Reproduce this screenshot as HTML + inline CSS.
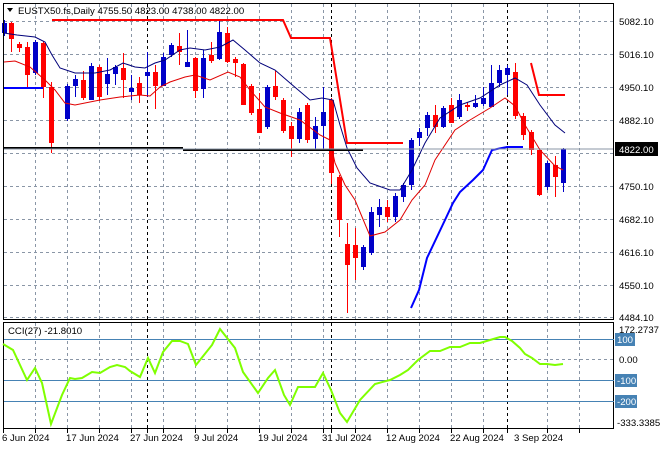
<!DOCTYPE html>
<html><head><meta charset="utf-8"><style>
body{margin:0;background:#fff;width:660px;height:450px;overflow:hidden;font-family:"Liberation Sans",sans-serif;}
svg{position:absolute;left:0;top:0}
text{font-family:"Liberation Sans",sans-serif;font-size:9.6px;fill:#000}
</style></head><body>
<svg id="s" width="660" height="450" viewBox="0 0 660 450">
<g id="grid" stroke="#8a96a6" stroke-width="1" stroke-dasharray="3,3" fill="none"></g>
<g id="c"></g>
<polyline fill="none" stroke="#00007a" stroke-width="1" points="4,33 17,35 35,37 45,42 52,55 60,68 75,73 95,73 110,70 123,63 135,67 145,68 155,63 165,60 180,50 190,48 205,50 220,47 233,40 245,50 260,63 275,70 290,83 310,100 322,98 333,100 340,125 347,148 357,168 370,183 390,190 400,190 412,170 425,143 440,118 460,105 480,98 500,85 515,78 527,85 540,105 555,125 565,133"/>
<polyline fill="none" stroke="#e00000" stroke-width="1" points="4,62 15,61 30,67 45,80 55,90 65,103 75,105 100,100 120,97 140,95 150,96 160,87 170,82 185,77 195,75 210,80 228,72 240,77 250,90 265,107 280,113 300,120 320,135 330,140 335,163 345,185 355,200 370,236 385,232 400,220 412,200 425,185 435,160 455,130 470,120 490,108 505,98 515,106 525,125 540,150 555,166 563,170"/>
<polyline fill="none" stroke="#ff0000" stroke-width="2" points="52,20 283,20 291,38 330,38 347,143 403,143"/>
<polyline fill="none" stroke="#ff0000" stroke-width="2" points="531,63 539,95 565,95"/>
<polyline fill="none" stroke="#0000ff" stroke-width="2" points="4,88 43,88"/>
<polyline fill="none" stroke="#0000ff" stroke-width="2" points="411,308 419,290 427,258 445,220 453,203 460,192 473,180 483,170 492,150 507,147 523,147"/>
<polyline fill="none" stroke="#000" stroke-width="2" points="4,148 183,148"/>
<polyline fill="none" stroke="#000" stroke-width="2" points="183,150 363,150"/>
<line x1="4" y1="149" x2="614" y2="149" stroke="#8a96a6"/>
<rect x="3.5" y="3.5" width="610" height="316" fill="none" stroke="#000"/>
<rect x="3.5" y="322.5" width="610" height="106" fill="none" stroke="#000"/>
<g stroke="#4682b4" stroke-width="1">
<line x1="4" y1="339.5" x2="614" y2="339.5"/><line x1="4" y1="380.5" x2="614" y2="380.5"/><line x1="4" y1="401.5" x2="614" y2="401.5"/>
</g>
<line x1="4" y1="359.5" x2="614" y2="359.5" stroke="#8a96a6" stroke-dasharray="3,3"/>
<polyline fill="none" stroke="#7fff00" stroke-width="2" points="3,344 13,350 27,380 35,368 42,383 51,424 62,395 70,378 75,379 82,378 92,372 100,373 110,367 117,365 125,367 130,371 140,377 148,358 155,373 163,352 172,341 180,341 188,344 196,365 212,345 220,329 235,348 243,372 258,393 268,378 275,370 284,395 290,405 298,387 315,387 323,373 331,390 340,413 347,422 360,400 375,384 390,380 400,375 408,370 418,360 430,351 440,351 450,347 460,347 470,343 480,343 490,340 500,337 505,337 512,341 520,348 525,354 532,358 540,364 547,364 555,365 563,364"/>
<g>
<text x="619" y="25">5082.10</text><text x="619" y="58">5016.10</text><text x="619" y="91">4950.10</text><text x="619" y="124">4882.10</text>
<rect x="615" y="142" width="43" height="14" fill="#000"/><text x="619" y="153" style="fill:#fff">4822.00</text>
<text x="619" y="190">4750.10</text><text x="619" y="223">4682.10</text><text x="619" y="256">4616.10</text><text x="619" y="289">4550.10</text><text x="619" y="321">4484.10</text>
<text x="619" y="333">172.2737</text>
<rect x="615" y="333" width="20" height="13" fill="#4682b4"/><text x="617" y="343" style="fill:#fff">100</text>
<text x="619" y="363">0.00</text>
<rect x="615" y="374" width="22" height="13" fill="#4682b4"/><text x="617" y="384" style="fill:#fff">-100</text>
<rect x="615" y="395" width="22" height="13" fill="#4682b4"/><text x="617" y="405" style="fill:#fff">-200</text>
<text x="617" y="426">-333.3385</text>
</g>
<g>
<text x="2" y="441">6 Jun 2024</text><text x="66" y="441">17 Jun 2024</text><text x="130" y="441">27 Jun 2024</text><text x="194" y="441">9 Jul 2024</text><text x="258" y="441">19 Jul 2024</text><text x="322" y="441">31 Jul 2024</text><text x="386" y="441">12 Aug 2024</text><text x="450" y="441">22 Aug 2024</text><text x="514" y="441">3 Sep 2024</text>
</g>
<polygon points="7,8 13,8 10,12" fill="#000"/>
<text x="18" y="14">EUSTX50.fs,Daily  4755.50 4823.00 4738.00 4822.00</text>
<text x="8" y="334">CCI(27) -21.8010</text>
</svg>
<script>
var ns="http://www.w3.org/2000/svg";
function el(p,t,a){var e=document.createElementNS(ns,t);for(var k in a)e.setAttribute(k,a[k]);p.appendChild(e);return e;}
var g=document.getElementById('grid');
var xs=[35,67,99,131,163,195,227,259,291,323,355,387,419,451,483,547,579];
xs.forEach(function(x){el(g,'line',{x1:x+.5,y1:4,x2:x+.5,y2:319});el(g,'line',{x1:x+.5,y1:323,x2:x+.5,y2:428});});
[147,331,507].forEach(function(x){el(g,'line',{x1:x+.5,y1:4,x2:x+.5,y2:319,stroke:'#000'});el(g,'line',{x1:x+.5,y1:323,x2:x+.5,y2:428,stroke:'#000'});});
[21,54,87,120,153,186,219,252,285,317].forEach(function(y){el(g,'line',{x1:4,y1:y+.5,x2:614,y2:y+.5});});
xs.concat([147,331,507,3]).forEach(function(x){el(g,'line',{x1:x+.5,y1:429,x2:x+.5,y2:433,'stroke-dasharray':'none',stroke:'#000'});});
var d=[[4,23,33,20,36,'b'],[11,23,39,22,52,'r'],[19,44,48,42,52,'r'],[27,47,75,42,87,'r'],[35,42,73,40,75,'b'],[43,43,87,41,98,'r'],[51,87,143,82,153,'r'],
[67,86,119,84,121,'b'],[75,79,86,75,97,'b'],[83,80,98,71,100,'r'],[91,66,100,63,100,'b'],[99,67,97,65,101,'r'],[107,74,84,58,95,'b'],[115,67,74,65,85,'b'],[123,68,80,53,98,'r'],[131,88,92,75,100,'b'],[139,83,95,77,103,'r'],[147,72,76,52,97,'b'],[155,72,86,65,109,'r'],[163,57,86,53,86,'b'],[171,45,55,43,57,'b'],[179,46,52,33,65,'r'],[187,62,67,30,67,'b'],[195,58,91,57,98,'r'],[203,58,89,50,98,'b'],[211,55,61,42,63,'r'],[219,32,59,19,60,'b'],[227,33,62,27,63,'r'],[235,59,63,57,77,'r'],[243,64,105,63,105,'r'],[251,86,113,84,115,'r'],[259,109,133,93,133,'r'],[267,87,127,85,129,'b'],[275,86,97,71,100,'r'],[283,100,131,98,133,'r'],[291,126,139,122,157,'r'],[299,112,139,108,143,'b'],[307,105,140,103,143,'r'],[315,126,139,117,150,'b'],[323,112,126,87,150,'b'],
[331,100,173,98,184,'r'],[339,177,220,175,237,'r'],[347,244,265,223,313,'r'],[355,245,258,228,280,'r'],[363,247,267,245,270,'b'],[371,212,253,207,255,'b'],[379,207,215,199,227,'b'],[387,207,217,200,222,'r'],[395,196,217,193,222,'b'],[403,185,197,183,202,'b'],[411,140,185,138,190,'b'],[419,132,138,128,146,'b'],[427,115,128,112,136,'b'],[435,115,127,105,133,'r'],[443,108,127,106,128,'b'],[451,105,123,98,123,'r'],[459,100,117,94,119,'b'],[467,105,107,102,111,'r'],[475,103,107,95,108,'b'],[483,98,104,87,106,'b'],[491,83,107,65,107,'b'],[499,70,83,65,87,'b'],[507,68,75,65,95,'b'],[515,72,116,63,119,'r'],[523,116,135,113,140,'r'],[531,132,150,130,155,'r'],[539,150,195,148,196,'r'],[547,163,187,161,190,'b'],[555,165,177,156,197,'r'],[563,149,183,148,192,'b']];
var c=document.getElementById('c');
d.forEach(function(k){var col=k[5]=='r'?'#ff0000':'#0000c8';
el(c,'line',{x1:k[0]+.5,y1:k[3],x2:k[0]+.5,y2:k[4],stroke:col});
el(c,'rect',{x:k[0]-2,y:k[1],width:5,height:Math.max(1,k[2]-k[1]),fill:col});});
</script>
</body></html>
